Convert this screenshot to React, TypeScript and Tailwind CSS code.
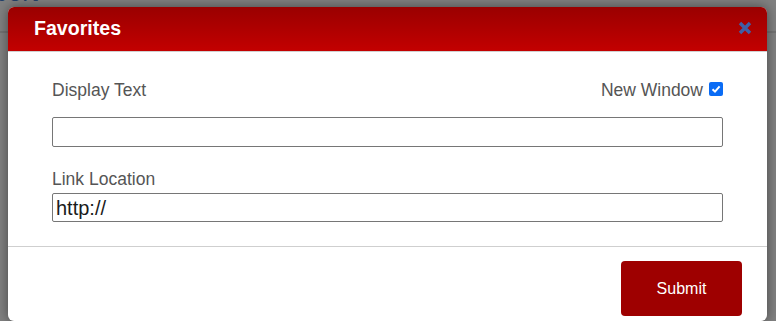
import React from "react";

export default function App() {
  return (
    <div className="relative w-[776px] h-[321px] overflow-hidden bg-[#808080] font-['Liberation_Sans',Arial,sans-serif]">
      {/* underlying page, dimmed */}
      <div className="absolute left-[-40px] top-[-21px] text-[26px] text-[#24406a] leading-none">Report</div>
      <div className="absolute left-0 right-0 top-[31px] h-[2px] bg-[#727272]" />

      {/* modal */}
      <div className="absolute left-[8px] top-[7px] w-[759px] h-[314px] bg-white rounded-[6px] shadow-[0_0_12px_rgba(0,0,0,0.45)] flex flex-col">
        <div className="h-[45px] rounded-t-[6px] bg-gradient-to-b from-[#9a0000] to-[#c30000] flex items-center justify-between pl-[26px] pr-[15px] border-b border-[#d0d0d0]">
          <span className="text-white font-bold text-[19.6px] leading-none">Favorites</span>
          <svg width="14" height="14" viewBox="0 0 14 14" className="mt-[-3px]">
            <path d="M2 2 L12 12 M12 2 L2 12" stroke="#3f5fa6" strokeWidth="3.4" strokeLinecap="butt" />
          </svg>
        </div>

        <div className="px-[44px] pt-[28px]">
          <div className="flex items-center justify-between h-[20px] text-[17.5px] text-[#555555]">
            <span>Display Text</span>
            <span className="flex items-center">
              New Window
              <span className="ml-[6px] w-[14px] h-[14px] rounded-[2px] bg-[#0a6cf5] flex items-center justify-center mt-[-3px]">
                <svg width="10" height="10" viewBox="0 0 10 10">
                  <path d="M1.5 5.2 L4 7.6 L8.6 2.4" stroke="white" strokeWidth="2" fill="none" />
                </svg>
              </span>
            </span>
          </div>
          <div className="mt-[17px] h-[30px] border border-[#767676] rounded-[2px]" />
          <div className="mt-[22px] h-[20px] text-[17.5px] text-[#555555] leading-[20px]">Link Location</div>
          <div className="mt-[4px] h-[29px] border border-[#767676] rounded-[2px] flex items-center pl-[3px] text-[20px] text-[#1a1a1a]">
            http://
          </div>
        </div>

        <div className="mt-[24px] border-t border-[#cfcfcf]" />
        <div className="flex justify-end pr-[25px] pt-[14px]">
          <button className="w-[121px] h-[55px] rounded-[4px] bg-[#9e0000] text-white text-[16px]">Submit</button>
        </div>
      </div>
    </div>
  );
}
